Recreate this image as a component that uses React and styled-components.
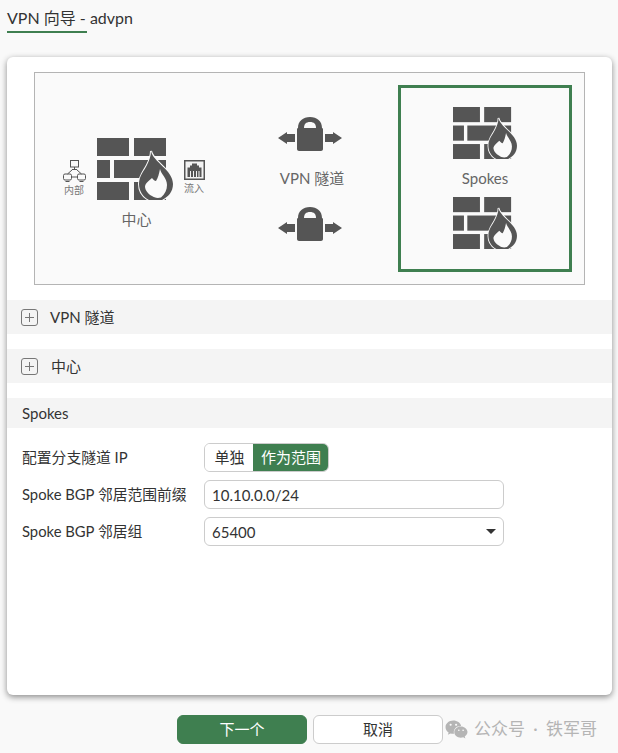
import React from "react";
import styled, { createGlobalStyle } from "styled-components";
import { FaWeixin } from "react-icons/fa";

const FONT = `Lato, "Noto Sans CJK SC", sans-serif`;
const GREEN = "#3f7f50";
const ICON = "#555555";

const GlobalStyle = createGlobalStyle`
  html, body {
    margin: 0;
    height: 100%;
    background: #f9f9f9;
    font-family: ${FONT};
    overflow: hidden;
  }
`;

const Page = styled.div`
  position: relative;
  width: 618px;
  height: 753px;
  padding: 0 6px 0 7px;
  box-sizing: border-box;
`;

const Header = styled.div`
  height: 57px;
`;

const HeaderTitle = styled.div`
  display: inline-block;
  width: 80px;
  height: 31px;
  line-height: 36px;
  white-space: nowrap;
  font-size: 16px;
  color: #333;
  border-bottom: 2px solid ${GREEN};
`;

const Card = styled.div`
  height: 638px;
  box-sizing: border-box;
  padding-top: 15px;
  background: #fff;
  border-radius: 6px;
  box-shadow: 0 2px 6px rgba(0, 0, 0, 0.45);
`;

const Diagram = styled.div`
  display: grid;
  grid-template-columns: 197px 156px 1fr;
  align-items: center;
  height: 213px;
  box-sizing: border-box;
  margin: 0 27px;
  border: 1px solid #b4b4b4;
  background: #fafafa;
`;

const HubCell = styled.div`
  display: flex;
  flex-direction: column;
  align-items: center;
  gap: 9px;
  padding-top: 10px;
`;

const HubRow = styled.div`
  display: flex;
  align-items: flex-start;
  gap: 11px;
  height: 62px;
`;

const MiniDevice = styled.div`
  display: flex;
  flex-direction: column;
  align-items: center;
  margin-top: 22px;
  font-size: 10px;
  line-height: 16px;
  color: #777;
`;

const DiagramLabel = styled.div`
  font-size: 15px;
  line-height: 20px;
  color: #666;
  padding-left: ${props => props.$shift || 0}px;
  padding-bottom: ${props => props.$lift || 0}px;
`;

const TunnelCell = styled.div`
  display: flex;
  flex-direction: column;
  align-items: center;
  gap: 17px;
`;

const SpokesBox = styled.div`
  display: flex;
  flex-direction: column;
  align-items: center;
  gap: 9px;
  height: 187px;
  box-sizing: border-box;
  margin-left: 10px;
  width: 174px;
  padding-top: 19px;
  border: 3px solid ${GREEN};
`;

const Band = styled.div`
  display: flex;
  align-items: center;
  gap: ${props => props.$gap || 12}px;
  height: ${props => props.$height || 34}px;
  margin-top: 15px;
  padding-left: ${props => props.$pad || 14}px;
  background: #f4f4f4;
  font-size: 15px;
  line-height: 32px;
  color: #333;
`;

const Form = styled.div`
  display: flex;
  flex-direction: column;
  gap: 8px;
  padding: 15px 0 0 15px;
`;

const Row = styled.div`
  display: flex;
  align-items: center;
  height: 29px;
`;

const Label = styled.div`
  width: 182px;
  padding-bottom: 2px;
  font-size: 14.8px;
  color: #333;
  white-space: nowrap;
`;

const Toggle = styled.div`
  display: flex;
  height: 29px;
  box-sizing: border-box;
  border: 1px solid #ccc;
  border-radius: 6px;
  overflow: hidden;
`;

const ToggleItem = styled.div`
  display: flex;
  align-items: center;
  justify-content: center;
  width: ${props => props.$width}px;
  margin: ${props => (props.$active ? "-1px" : "0")};
  padding-bottom: 2px;
  font-size: 15px;
  color: ${props => (props.$active ? "#fff" : "#333")};
  background: ${props => (props.$active ? GREEN : "#fff")};
`;

const Field = styled.div`
  display: flex;
  align-items: center;
  justify-content: space-between;
  width: 300px;
  height: 29px;
  box-sizing: border-box;
  padding: 0 7px 0 7px;
  border: 1px solid #ccc;
  border-radius: 6px;
  font-size: 15px;
  color: #333;
`;

const Caret = styled.span`
  width: 0;
  height: 0;
  border-left: 5px solid transparent;
  border-right: 5px solid transparent;
  border-top: 5px solid #333;
`;

const Footer = styled.div`
  display: flex;
  gap: 6px;
  padding: 20px 0 0 170px;
`;

const Button = styled.div`
  display: flex;
  align-items: center;
  justify-content: center;
  width: 130px;
  height: 29px;
  box-sizing: border-box;
  padding-bottom: 2px;
  border: 1px solid ${props => (props.$primary ? GREEN : "#ccc")};
  border-radius: 6px;
  font-size: 15px;
  color: ${props => (props.$primary ? "#fff" : "#333")};
  background: ${props => (props.$primary ? GREEN : "#fff")};
`;

const Watermark = styled.div`
  position: absolute;
  left: 445px;
  top: 717px;
  display: flex;
  align-items: center;
  gap: 6px;
  font-size: 17px;
  line-height: 24px;
  word-spacing: 4px;
  color: #b5b5b5;
  white-space: nowrap;
`;

const Firewall = ({ width = 76 }) => (
  <svg width={width} height={(width * 62) / 76} viewBox="0 0 76 62">
    <g fill={ICON}>
      <rect x="0" y="0" width="32" height="18" />
      <rect x="37" y="0" width="32" height="18" />
      <rect x="0" y="22" width="13" height="18" />
      <rect x="17" y="22" width="52" height="18" />
      <rect x="0" y="44" width="32" height="18" />
      <rect x="37" y="44" width="32" height="18" />
    </g>
    <path
      d="M54 13C56 24 76 32 76 46C76 54 71 59 65 62H52C46 59 42 53 42 46C42 38 47 33 50 27C52 23 54 18 54 13Z"
      fill={ICON}
      stroke="#fafafa"
      strokeWidth="2"
      paintOrder="stroke"
    />
    <path
      d="M63 31C64 36 70 40 70 47C70 52 68 56 64 59.5C60 60.5 57 59.5 55 58C51 56 48 52 48 48.5C48.5 45 52 43 55 40C56 41 57.5 43 59 43C61 40 62 36 63 31Z"
      fill="#fafafa"
    />
  </svg>
);

const LockArrows = () => (
  <svg width="64" height="34" viewBox="0 0 64 34">
    <path
      d="M0 21L9 15V17H17V25H9V27ZM64 21L55 15V17H47V25H55V27Z"
      fill={ICON}
    />
    <path
      d="M20 11C20 4 25 0 32 0C39 0 44 4 44 11C45 11 45 12 45 13V32C45 33 44 34 43 34H21C20 34 19 33 19 32V13C19 12 19 11 20 11ZM26 11H38C38 7 36 5 32 5C28 5 26 7 26 11Z"
      fill={ICON}
      fillRule="evenodd"
    />
  </svg>
);

const NetworkIcon = () => (
  <svg width="23" height="22" viewBox="0 0 23 22" fill="none" stroke="#555" strokeWidth="1">
    <rect x="7.5" y="0.5" width="8" height="6.5" />
    <path d="M9 9.5H14M11.5 7V9.5M9.5 9.5L4.5 14M13.5 9.5L18.5 14M8.5 17H14.5" />
    <rect x="0.5" y="14" width="8" height="6" rx="1.5" />
    <rect x="14.5" y="14" width="8" height="6" rx="1.5" />
    <path d="M2.5 21.5H6.5M16.5 21.5H20.5" />
  </svg>
);

const PortIcon = () => (
  <svg width="21" height="20" viewBox="0 0 21 20">
    <rect x="0" y="0" width="21" height="20" fill="#555" />
    <rect x="1.5" y="1.5" width="18" height="17" fill="#f2f2f2" />
    <path d="M8 3.5H13V5.5H15V7.5H17.5V17H3.5V7.5H6V5.5H8Z" fill="#555" />
    <path d="M6.5 11V17M9.5 11V17M12.5 11V17M15 11V17" stroke="#f2f2f2" strokeWidth="1" />
  </svg>
);

const PlusBox = () => (
  <svg width="17" height="17" viewBox="0 0 17 17" fill="none">
    <rect x="0.5" y="0.5" width="16" height="16" rx="2.5" stroke="#777" />
    <path d="M8.5 4V13M4 8.5H13" stroke="#777" />
  </svg>
);

const App = () => {
  return (
    <Page>
      <GlobalStyle />
      <Header>
        <HeaderTitle>VPN 向导 - advpn</HeaderTitle>
      </Header>
      <Card>
        <Diagram>
          <HubCell>
            <HubRow>
              <MiniDevice>
                <NetworkIcon />
                内部
              </MiniDevice>
              <Firewall />
              <MiniDevice>
                <PortIcon />
                流入
              </MiniDevice>
            </HubRow>
            <DiagramLabel $shift={6}>中心</DiagramLabel>
          </HubCell>
          <TunnelCell>
            <LockArrows />
            <DiagramLabel $shift={4} $lift={2}>VPN 隧道</DiagramLabel>
            <LockArrows />
          </TunnelCell>
          <SpokesBox>
            <Firewall width={64} />
            <DiagramLabel>Spokes</DiagramLabel>
            <Firewall width={64} />
          </SpokesBox>
        </Diagram>
        <Band>
          <PlusBox />
          VPN 隧道
        </Band>
        <Band $gap={13}>
          <PlusBox />
          中心
        </Band>
        <Band $height={30} $pad={15}>Spokes</Band>
        <Form>
          <Row>
            <Label>配置分支隧道 IP</Label>
            <Toggle>
              <ToggleItem $width={49}>单独</ToggleItem>
              <ToggleItem $width={76} $active>作为范围</ToggleItem>
            </Toggle>
          </Row>
          <Row>
            <Label>Spoke BGP 邻居范围前缀</Label>
            <Field>10.10.0.0/24</Field>
          </Row>
          <Row>
            <Label>Spoke BGP 邻居组</Label>
            <Field>
              65400
              <Caret />
            </Field>
          </Row>
        </Form>
      </Card>
      <Footer>
        <Button $primary>下一个</Button>
        <Button>取消</Button>
      </Footer>
      <Watermark>
        <FaWeixin size={23} />
        公众号 · 铁军哥
      </Watermark>
    </Page>
  );
};

export default App;
